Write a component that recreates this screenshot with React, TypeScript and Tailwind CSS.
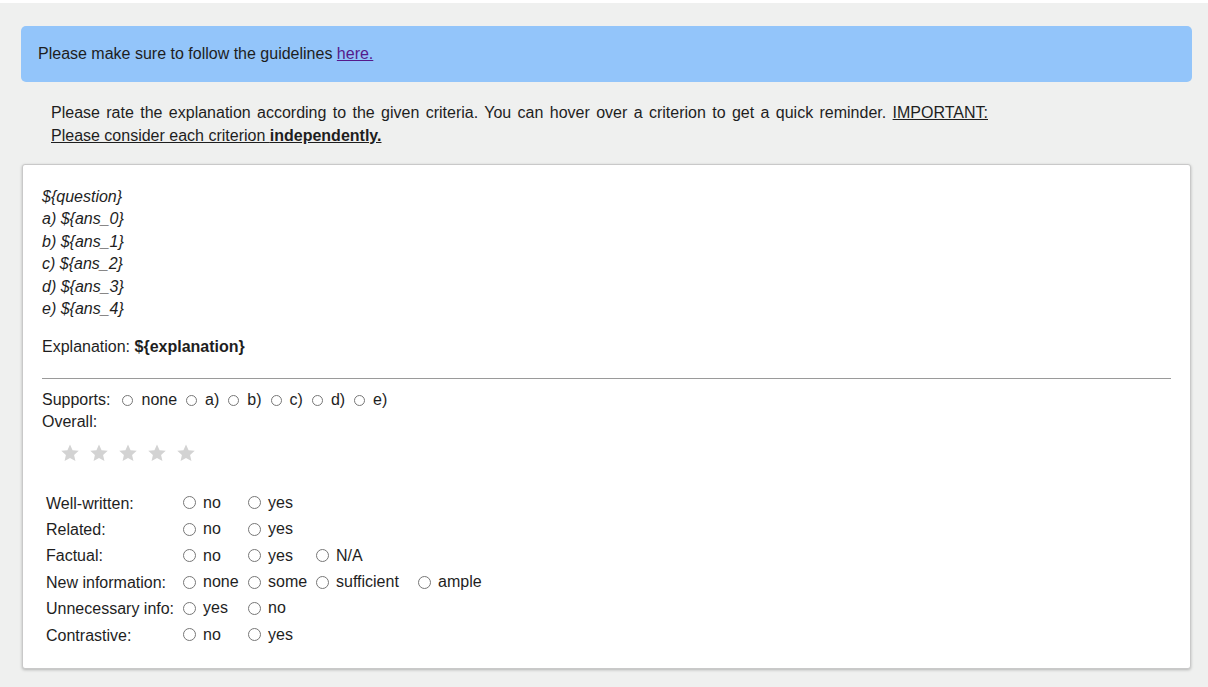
import React from "react";

const Circle = ({ size = 13 }: { size?: number }) => (
  <span
    className={
      size === 13
        ? "inline-block w-[13px] h-[13px] rounded-full border border-[#777] bg-white shrink-0"
        : "inline-block w-[11px] h-[11px] rounded-full border border-[#777] bg-white shrink-0"
    }
  />
);

const Star = () => (
  <svg width="20" height="20" viewBox="0 0 24 24" className="shrink-0">
    <path
      d="M12 1.8l3.09 6.9 7.41.72-5.6 4.98 1.63 7.33L12 17.9l-6.53 3.83 1.63-7.33-5.6-4.98 7.41-.72z"
      fill="#d3d3d3"
    />
  </svg>
);

const Opt = ({ label }: { label: string }) => (
  <span className="inline-flex items-center">
    <Circle />
    <span className="ml-[7px]">{label}</span>
  </span>
);

const rows: { label: string; opts: string[] }[] = [
  { label: "Well-written:", opts: ["no", "yes"] },
  { label: "Related:", opts: ["no", "yes"] },
  { label: "Factual:", opts: ["no", "yes", "N/A"] },
  { label: "New information:", opts: ["none", "some", "sufficient", "ample"] },
  { label: "Unnecessary info:", opts: ["yes", "no"] },
  { label: "Contrastive:", opts: ["no", "yes"] },
];

export default function App() {
  return (
    <div
      className="bg-white pt-[3px] text-[16px] text-[#1e1e1e]"
      style={{ fontFamily: '"Liberation Sans", Arial, Helvetica, sans-serif' }}
    >
      <div className="bg-[#eff0ef] min-h-[684px] pl-[21px] pr-[16px] pt-[23px] pb-[19px]">
        <div className="bg-[#93c5fa] rounded-[5px] px-[17px] py-[18px] leading-[20px]">
          Please make sure to follow the guidelines{" "}
          <a href="#" className="text-[#551a8b] underline">
            here.
          </a>
        </div>

        <p className="ml-[30px] w-[937px] mt-[19px] text-justify leading-[23px]">
          Please rate the explanation according to the given criteria. You can hover over a
          criterion to get a quick reminder.{" "}
          <span className="underline">
            IMPORTANT: Please consider each criterion <b>independently.</b>
          </span>
        </p>

        <div className="mt-[17px] mx-[1px] bg-white border border-[#c9c9c9] rounded-[3px] shadow-[0_1px_3px_rgba(0,0,0,0.25)] px-[19px] pt-[21px] pb-[19px]">
          <div className="italic leading-[22.4px]">
            <div>{"${question}"}</div>
            <div>{"a) ${ans_0}"}</div>
            <div>{"b) ${ans_1}"}</div>
            <div>{"c) ${ans_2}"}</div>
            <div>{"d) ${ans_3}"}</div>
            <div>{"e) ${ans_4}"}</div>
          </div>
          <div className="mt-[16px] leading-[22px]">
            Explanation: <b>{"${explanation}"}</b>
          </div>
          <div className="mt-[20px] h-px bg-[#9a9a9a]" />
          <div className="mt-[10px] leading-[22px] flex items-center">
            <span className="mr-[3px]">Supports:</span>
            {["none", "a)", "b)", "c)", "d)", "e)"].map((o) => (
              <span key={o} className="inline-flex items-center ml-[9px]">
                <Circle size={11} />
                <span className="ml-[8px]">{o}</span>
              </span>
            ))}
          </div>
          <div className="leading-[22px]">Overall:</div>
          <div className="flex items-center gap-[9px] ml-[18px] mt-[10px] h-[20px]">
            <Star />
            <Star />
            <Star />
            <Star />
            <Star />
          </div>
          <div className="mt-[27px] ml-[4px] grid grid-cols-[137px_65px_68px_102px_auto] auto-rows-[26.4px] items-center">
            {rows.map((r) => (
              <React.Fragment key={r.label}>
                <div>{r.label}</div>
                {[0, 1, 2, 3].map((i) => (
                  <div key={i}>{r.opts[i] ? <Opt label={r.opts[i]} /> : null}</div>
                ))}
              </React.Fragment>
            ))}
          </div>
        </div>
      </div>
    </div>
  );
}
